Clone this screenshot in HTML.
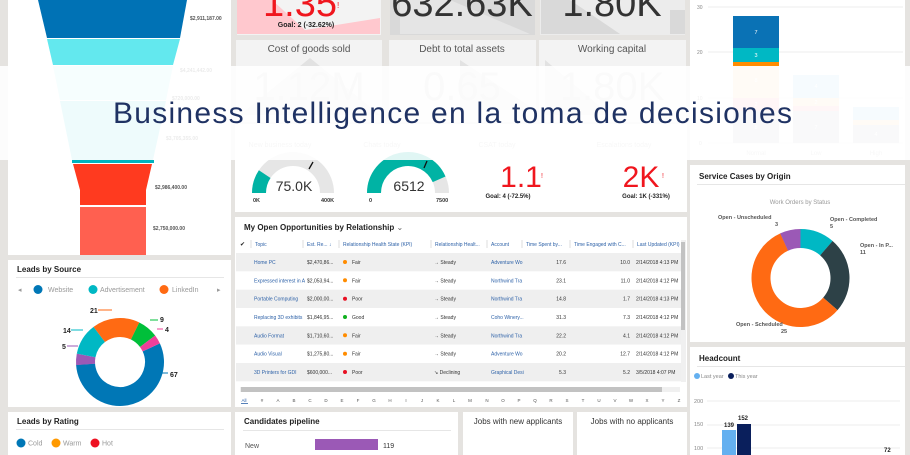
<!DOCTYPE html>
<html><head><meta charset="utf-8"><style>
html,body{margin:0;padding:0;width:910px;height:455px;overflow:hidden;background:#e5e3e0}
svg{display:block;font-family:"Liberation Sans",sans-serif}
</style></head><body>
<svg width="910" height="455" viewBox="0 0 910 455" xmlns="http://www.w3.org/2000/svg">
<rect width="910" height="455" fill="#e5e3e0"/>
<rect x="8" y="0" width="223" height="255" fill="#fff"/>
<polygon points="38,0 187,0 180,38 47,38" fill="#0072b5"/>
<polygon points="47,39 180,39 173,65 53,65" fill="#63e8ee"/>
<polygon points="53,66 173,66 166,100 60,100" fill="#b5f0f5"/>
<polygon points="60,101 166,101 153,160 72,160" fill="#70dce4"/>
<rect x="72" y="160" width="82" height="3" fill="#00b3bf"/>
<polygon points="73,164 152,164 146,190 146,205 80,205 80,190" fill="#ff3a1f"/>
<rect x="80" y="207" width="66" height="48" fill="#ff6050"/>
<g font-size="5" fill="#555" font-weight="bold">
<text x="190" y="20">$2,911,187.00</text>
<text x="180" y="72">$4,241,442.00</text>
<text x="172" y="100">$720,000.00</text>
<text x="166" y="140">$3,705,355.00</text>
<text x="155" y="189">$2,986,400.00</text>
<text x="153" y="230">$2,750,000.00</text>
</g>
<rect x="8" y="260" width="223" height="147" fill="#fff"/>
<text x="17" y="272" font-size="8" font-weight="bold" fill="#222">Leads by Source</text>
<rect x="16" y="277" width="208" height="1" fill="#e6e6e6"/>
<g font-size="7" fill="#999">
<text x="18" y="292">◂</text>
<circle cx="38" cy="289.5" r="4.5" fill="#0077b6"/><text x="48" y="292">Website</text>
<circle cx="93" cy="289.5" r="4.5" fill="#00b8c4"/><text x="100" y="292">Advertisement</text>
<circle cx="164" cy="289.5" r="4.5" fill="#ff6a13"/><text x="172" y="292">LinkedIn</text>
<text x="217" y="292">▸</text>
</g>
<g transform="translate(120,362)" fill="none" stroke-width="19">
<circle r="34.5" stroke="#0077b6" stroke-dasharray="121 300" transform="rotate(-25)"/>
<circle r="34.5" stroke="#9b59b6" stroke-dasharray="9 300" transform="rotate(176)"/>
<circle r="34.5" stroke="#00b8c4" stroke-dasharray="25.3 300" transform="rotate(191)"/>
<circle r="34.5" stroke="#ff6a13" stroke-dasharray="37.9 300" transform="rotate(233)"/>
<circle r="34.5" stroke="#00bf3a" stroke-dasharray="16.3 300" transform="rotate(-64)"/>
<circle r="34.5" stroke="#ef3f9a" stroke-dasharray="7.2 300" transform="rotate(-37)"/>
</g>
<g font-size="7" font-weight="bold" fill="#222">
<text x="90" y="313">21</text><text x="160" y="322">9</text><text x="165" y="332">4</text>
<text x="63" y="333">14</text><text x="62" y="349">5</text><text x="170" y="377">67</text>
</g>
<g stroke-width="1"><line x1="98" y1="310" x2="112" y2="310" stroke="#ff6a13"/><line x1="150" y1="320" x2="158" y2="320" stroke="#00bf3a"/><line x1="157" y1="329" x2="163" y2="329" stroke="#ef3f9a"/><line x1="71" y1="330" x2="83" y2="330" stroke="#00b8c4"/><line x1="67" y1="346" x2="78" y2="346" stroke="#9b59b6"/><line x1="161" y1="373" x2="168" y2="373" stroke="#0077b6"/></g>
<rect x="8" y="412" width="223" height="43" fill="#fff"/>
<text x="17" y="424" font-size="8" font-weight="bold" fill="#222">Leads by Rating</text>
<rect x="16" y="429" width="208" height="1" fill="#e6e6e6"/>
<g font-size="7" fill="#999">
<circle cx="21" cy="443" r="4.5" fill="#0077b6"/><text x="28" y="445.5">Cold</text>
<circle cx="56" cy="443" r="4.5" fill="#ff9900"/><text x="63" y="445.5">Warm</text>
<circle cx="95" cy="443" r="4.5" fill="#ee1122"/><text x="102" y="445.5">Hot</text>
</g>
<rect x="237" y="0" width="144" height="35" fill="#f3f3f3"/>
<polygon points="237,0 272,0 305,30 380,18 380,34 237,34" fill="#ffc8ce"/>
<text x="300" y="16" font-size="38" fill="#f0161e" text-anchor="middle">1.35</text><text x="337" y="8" font-size="8" fill="#f0161e">!</text>
<text x="306" y="27" font-size="7" font-weight="bold" fill="#222" text-anchor="middle">Goal: 2 (-32.62%)</text>
<rect x="390" y="0" width="145" height="35" fill="#d9d9d9"/>
<polygon points="400,0 450,0 530,34 400,34" fill="#ececec" opacity=".6"/>
<text x="462" y="16" font-size="38" fill="#333" text-anchor="middle">632.63K</text>
<rect x="540" y="0" width="145" height="35" fill="#ececec"/>
<polygon points="541,0 570,0 620,34 541,34" fill="#d9d9d9"/><rect x="670" y="10" width="15" height="24" fill="#d9d9d9"/>
<text x="612" y="16" font-size="38" fill="#333" text-anchor="middle">1.80K</text>
<rect x="236" y="40" width="146" height="82" fill="#f3f3f3"/>
<rect x="389" y="40" width="147" height="82" fill="#f3f3f3"/>
<rect x="539" y="40" width="147" height="82" fill="#f3f3f3"/>
<polygon points="240,115 310,58 380,115" fill="#e2e2e2"/>
<polygon points="460,60 535,110 460,110" fill="#e2e2e2"/>
<polygon points="545,60 610,115 545,115" fill="#e2e2e2"/>
<g font-size="10" fill="#555" text-anchor="middle">
<text x="309" y="52">Cost of goods sold</text><text x="462" y="52">Debt to total assets</text><text x="612" y="52">Working capital</text>
</g>
<g font-size="40" fill="#d2d2d2" text-anchor="middle">
<text x="309" y="100">1.12M</text><text x="462" y="100">0.65</text><text x="612" y="100">1.80K</text>
</g>
<rect x="235" y="124" width="452" height="88" fill="#fff"/>
<g font-size="7" fill="#bbb" text-anchor="middle"><text x="280" y="147">New business today</text><text x="382" y="147">Chats today</text><text x="497" y="147">CSAT today</text><text x="624" y="147">Escalations today</text></g>
<g fill="none" stroke-width="14">
<path d="M259,193 A34,34 0 0 1 327,193" stroke="#e6e6e6"/>
<path d="M259,193 A34,34 0 0 1 264.7,174.1" stroke="#00b3a4"/>
<path d="M374,193 A34,34 0 0 1 442,193" stroke="#e6e6e6"/>
<path d="M374,193 A34,34 0 0 1 439.1,179.3" stroke="#00b3a4"/>
</g>
<line x1="313" y1="162" x2="309" y2="169" stroke="#111" stroke-width="1.3"/>
<line x1="427" y1="161" x2="424" y2="168" stroke="#111" stroke-width="1.3"/>
<g font-size="14" fill="#333" text-anchor="middle"><text x="294" y="191">75.0K</text><text x="409" y="191">6512</text></g>
<g font-size="5.5" font-weight="bold" fill="#333"><text x="253" y="202">0K</text><text x="321" y="202">400K</text><text x="369" y="202">0</text><text x="436" y="202">7500</text></g>
<text x="521" y="187" font-size="30" fill="#f0161e" text-anchor="middle">1.1</text><text x="541" y="178" font-size="7" fill="#f0161e">!</text>
<text x="508" y="198" font-size="6" font-weight="bold" fill="#222" text-anchor="middle">Goal: 4 (-72.5%)</text>
<text x="641" y="187" font-size="30" fill="#f0161e" text-anchor="middle">2K</text><text x="662" y="178" font-size="7" fill="#f0161e">!</text>
<text x="646" y="198" font-size="6" font-weight="bold" fill="#222" text-anchor="middle">Goal: 1K (-331%)</text>
<rect x="235" y="217" width="452" height="190" fill="#fff"/>
<text x="244" y="230" font-size="8" font-weight="bold" fill="#222">My Open Opportunities by Relationship <tspan font-weight="normal" fill="#666">⌄</tspan></text>
<g font-size="5" fill="#2e62a8">
<text x="240" y="246" fill="#222" font-size="6">✔</text>
<text x="255" y="246">Topic</text><text x="307" y="246">Est. Re...  ↓</text><text x="343" y="246">Relationship Health State (KPI)</text><text x="435" y="246">Relationship Healt...</text><text x="491" y="246">Account</text><text x="526" y="246">Time Spent by...</text><text x="574" y="246">Time Engaged with C...</text><text x="637" y="246">Last Updated (KPI)</text>
</g>
<g stroke="#ddd"><line x1="251" y1="240" x2="251" y2="248"/><line x1="303" y1="240" x2="303" y2="248"/><line x1="339" y1="240" x2="339" y2="248"/><line x1="431" y1="240" x2="431" y2="248"/><line x1="487" y1="240" x2="487" y2="248"/><line x1="522" y1="240" x2="522" y2="248"/><line x1="570" y1="240" x2="570" y2="248"/><line x1="633" y1="240" x2="633" y2="248"/></g>
<rect x="236" y="253" width="445" height="18.3" fill="#efefef"/>
<rect x="236" y="289.7" width="445" height="18.3" fill="#efefef"/>
<rect x="236" y="326.3" width="445" height="18.3" fill="#efefef"/>
<rect x="236" y="363" width="445" height="18.3" fill="#efefef"/>
<g font-size="5">
<g fill="#2e62a8"><text x="254" y="264">Home PC</text><text x="254" y="282.3">Expressed interest in A</text><text x="254" y="300.7">Portable Computing</text><text x="254" y="319">Replacing 3D exhibits</text><text x="254" y="337.3">Audio Format</text><text x="254" y="355.7">Audio Visual</text><text x="254" y="374">3D Printers for GDI</text>
<text x="491" y="264">Adventure Wo</text><text x="491" y="282.3">Northwind Tra</text><text x="491" y="300.7">Northwind Tra</text><text x="491" y="319">Coho Winery...</text><text x="491" y="337.3">Northwind Tra</text><text x="491" y="355.7">Adventure Wo</text><text x="491" y="374">Graphical Desi</text></g>
<g fill="#333"><text x="307" y="264">$2,470,86...</text><text x="307" y="282.3">$2,053,94...</text><text x="307" y="300.7">$2,000,00...</text><text x="307" y="319">$1,846,95...</text><text x="307" y="337.3">$1,710,60...</text><text x="307" y="355.7">$1,275,80...</text><text x="307" y="374">$600,000...</text>
<text x="352" y="264">Fair</text><text x="352" y="282.3">Fair</text><text x="352" y="300.7">Poor</text><text x="352" y="319">Good</text><text x="352" y="337.3">Fair</text><text x="352" y="355.7">Fair</text><text x="352" y="374">Poor</text>
<text x="434" y="264">→  Steady</text><text x="434" y="282.3">→  Steady</text><text x="434" y="300.7">→  Steady</text><text x="434" y="319">→  Steady</text><text x="434" y="337.3">→  Steady</text><text x="434" y="355.7">→  Steady</text><text x="434" y="374">↘  Declining</text>
<g text-anchor="end"><text x="566" y="264">17.6</text><text x="566" y="282.3">23.1</text><text x="566" y="300.7">14.8</text><text x="566" y="319">31.3</text><text x="566" y="337.3">22.2</text><text x="566" y="355.7">20.2</text><text x="566" y="374">5.3</text>
<text x="630" y="264">10.0</text><text x="630" y="282.3">11.0</text><text x="630" y="300.7">1.7</text><text x="630" y="319">7.3</text><text x="630" y="337.3">4.1</text><text x="630" y="355.7">12.7</text><text x="630" y="374">5.2</text></g>
<text x="636" y="264">2/14/2018 4:13 PM</text><text x="636" y="282.3">2/14/2018 4:12 PM</text><text x="636" y="300.7">2/14/2018 4:13 PM</text><text x="636" y="319">2/14/2018 4:12 PM</text><text x="636" y="337.3">2/14/2018 4:12 PM</text><text x="636" y="355.7">2/14/2018 4:12 PM</text><text x="636" y="374">3/5/2018 4:07 PM</text></g>
</g>
<g><circle cx="345" cy="262" r="2" fill="#ff8c00"/><circle cx="345" cy="280.3" r="2" fill="#ff8c00"/><circle cx="345" cy="298.7" r="2" fill="#e81123"/><circle cx="345" cy="317" r="2" fill="#10b01e"/><circle cx="345" cy="335.3" r="2" fill="#ff8c00"/><circle cx="345" cy="353.7" r="2" fill="#ff8c00"/><circle cx="345" cy="372" r="2" fill="#e81123"/></g>
<rect x="681" y="240" width="5" height="142" fill="#f0f0f0"/><rect x="681" y="242" width="4" height="88" fill="#c2c2c2"/>
<rect x="240" y="387" width="440" height="5" fill="#f0f0f0"/><rect x="241" y="387" width="421" height="5" fill="#c2c2c2"/>
<g font-size="4.5" fill="#555" text-anchor="middle">
<text x="244" y="402" fill="#2e62a8">All</text><text x="262" y="402">#</text><text x="278" y="402">A</text><text x="294" y="402">B</text><text x="310" y="402">C</text><text x="326" y="402">D</text><text x="342" y="402">E</text><text x="358" y="402">F</text><text x="374" y="402">G</text><text x="390" y="402">H</text><text x="406" y="402">I</text><text x="422" y="402">J</text><text x="438" y="402">K</text><text x="454" y="402">L</text><text x="470" y="402">M</text><text x="487" y="402">N</text><text x="503" y="402">O</text><text x="519" y="402">P</text><text x="535" y="402">Q</text><text x="551" y="402">R</text><text x="567" y="402">S</text><text x="583" y="402">T</text><text x="599" y="402">U</text><text x="615" y="402">V</text><text x="631" y="402">W</text><text x="647" y="402">X</text><text x="663" y="402">Y</text><text x="679" y="402">Z</text>
</g>
<rect x="241" y="403" width="7" height="0.8" fill="#2e62a8"/>
<rect x="235" y="412" width="223" height="43" fill="#fff"/>
<text x="244" y="424" font-size="8" font-weight="bold" fill="#222">Candidates pipeline</text>
<rect x="243" y="430" width="208" height="1" fill="#e6e6e6"/>
<text x="245" y="448" font-size="7" fill="#555">New</text>
<rect x="315" y="439" width="63" height="11" fill="#9b59b6"/>
<text x="383" y="448" font-size="7" fill="#333">119</text>
<rect x="463" y="412" width="110" height="43" fill="#fff"/>
<text x="518" y="424" font-size="8" fill="#333" text-anchor="middle">Jobs with new applicants</text>
<rect x="577" y="412" width="110" height="43" fill="#fff"/>
<text x="632" y="424" font-size="8" fill="#333" text-anchor="middle">Jobs with no applicants</text>
<rect x="690" y="0" width="215" height="160" fill="#fff"/>
<g stroke="#eee"><line x1="708" y1="7" x2="903" y2="7"/><line x1="708" y1="52" x2="903" y2="52"/><line x1="708" y1="98" x2="903" y2="98"/><line x1="708" y1="143" x2="903" y2="143"/></g>
<g font-size="5" fill="#888"><text x="697" y="9">30</text><text x="697" y="54">20</text><text x="697" y="100">10</text><text x="699" y="145">0</text></g>
<rect x="733" y="16" width="46" height="32" fill="#0a72b5"/><rect x="733" y="48" width="46" height="14" fill="#00b8c4"/><rect x="733" y="62" width="46" height="4" fill="#ff8c00"/><rect x="733" y="66" width="46" height="32" fill="#ffd9b0"/><rect x="733" y="98" width="46" height="13" fill="#ffb0b8"/><rect x="733" y="111" width="46" height="32" fill="#c8ccd2"/>
<rect x="793" y="75" width="46" height="23" fill="#b6daf0"/><rect x="793" y="98" width="46" height="8" fill="#ffd9b0"/><rect x="793" y="106" width="46" height="5" fill="#ffb0b8"/><rect x="793" y="111" width="46" height="32" fill="#c8ccd2"/>
<rect x="853" y="107" width="46" height="13" fill="#b6daf0"/><rect x="853" y="120" width="46" height="5" fill="#ffd9b0"/><rect x="853" y="125" width="46" height="18" fill="#c8ccd2"/>
<g font-size="5.5" fill="#fff" text-anchor="middle"><text x="756" y="34">7</text><text x="756" y="57">3</text><text x="756" y="82">8</text><text x="756" y="106">2</text><text x="756" y="129">8</text><text x="816" y="88">4</text><text x="816" y="104">2</text><text x="816" y="129">7</text><text x="876" y="95">2</text><text x="876" y="136">4</text></g>
<g font-size="6" fill="#bbb" text-anchor="middle"><text x="756" y="155">Normal</text><text x="816" y="155">Low</text><text x="876" y="155">High</text></g>
<rect x="690" y="165" width="215" height="177" fill="#fff"/>
<text x="699" y="179" font-size="8" font-weight="bold" fill="#222">Service Cases by Origin</text>
<rect x="697" y="184" width="208" height="1" fill="#e6e6e6"/>
<text x="800" y="204" font-size="6" fill="#999" text-anchor="middle">Work Orders by Status</text>
<g transform="translate(800.5,278)" fill="none" stroke-width="19">
<circle r="39.5" stroke="#00b8c4" stroke-dasharray="28.2 300" transform="rotate(-90)"/>
<circle r="39.5" stroke="#2d4147" stroke-dasharray="62 300" transform="rotate(-49.1)"/>
<circle r="39.5" stroke="#ff6a13" stroke-dasharray="141 300" transform="rotate(40.9)"/>
<circle r="39.5" stroke="#9b59b6" stroke-dasharray="16.9 300" transform="rotate(245.5)"/>
</g>
<g font-size="5.5" fill="#555" font-weight="bold">
<text x="718" y="219">Open - Unscheduled</text><text x="775" y="226">3</text>
<text x="830" y="221">Open - Completed</text><text x="830" y="228">5</text>
<text x="860" y="247">Open - In P...</text><text x="860" y="254">11</text>
<text x="736" y="326">Open - Scheduled</text><text x="781" y="333">25</text>
</g>
<rect x="690" y="347" width="215" height="108" fill="#fff"/>
<text x="699" y="361" font-size="8" font-weight="bold" fill="#222">Headcount</text>
<rect x="697" y="366" width="208" height="1" fill="#e6e6e6"/>
<g font-size="5.5" fill="#888"><circle cx="697" cy="376" r="3" fill="#64b0f0"/><text x="701" y="378">Last year</text><circle cx="731" cy="376" r="3" fill="#0a1f5c"/><text x="735" y="378">This year</text>
<text x="694" y="403">200</text><text x="694" y="426">150</text><text x="694" y="450">100</text></g>
<g stroke="#eee"><line x1="707" y1="401" x2="900" y2="401"/><line x1="707" y1="425" x2="900" y2="425"/><line x1="707" y1="448" x2="900" y2="448"/></g>
<rect x="722" y="430" width="14" height="25" fill="#64b0f0"/><rect x="737" y="424" width="14" height="31" fill="#0a1f5c"/>
<g font-size="6" fill="#222" font-weight="bold"><text x="724" y="427">139</text><text x="738" y="420">152</text><text x="884" y="452">72</text></g>
<rect x="0" y="66" width="910" height="94" fill="#fff" opacity="0.88"/>
<text x="113" y="123" font-size="30" fill="#1f3263" textLength="679" lengthAdjust="spacing">Business Intelligence en la toma de decisiones</text>
</svg>
</body></html>
